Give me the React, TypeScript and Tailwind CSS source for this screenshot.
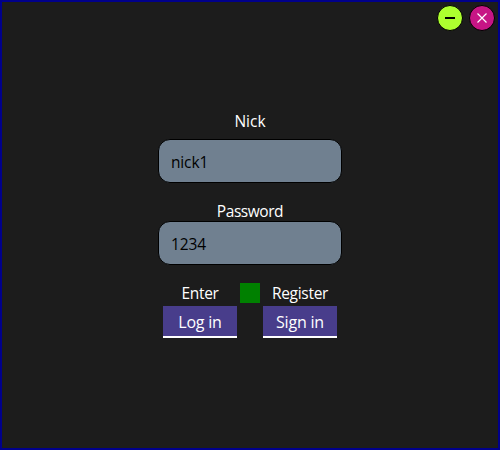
import { useState } from "react";

const font = "font-['Segoe_UI','Open_Sans',sans-serif]";

function TitleBar() {
  return (
    <header className="flex h-[34px] justify-end gap-[6px] pr-[3px] pt-[3px]">
      <button aria-label="Minimize" className="size-[26px] rounded-full border border-black bg-[#adff2f]">
        <svg viewBox="0 0 24 24" className="size-6">
          <path d="M7 12H17" stroke="black" strokeWidth="2" />
        </svg>
      </button>
      <button aria-label="Close" className="size-[26px] rounded-full border border-black bg-[#c71585]">
        <svg viewBox="0 0 24 24" className="size-6">
          <path d="M7.5 7.5L16.5 16.5M16.5 7.5L7.5 16.5" stroke="white" strokeWidth="1.2" />
        </svg>
      </button>
    </header>
  );
}

function Field({ value, onChange }: { value: string; onChange: (v: string) => void }) {
  return (
    <input
      value={value}
      onChange={(e) => onChange(e.target.value)}
      className="h-[44px] w-[184px] rounded-[12px] border border-black bg-[#708090] pl-3 pt-px text-[15.5px] tracking-[-0.15px] text-black outline-none"
    />
  );
}

export default function App() {
  const [nick, setNick] = useState("nick1");
  const [password, setPassword] = useState("1234");
  const button = "mt-[3px] h-8 w-[74px] border-b-2 border-white bg-[#483d8b] pt-[2px] text-[16px] tracking-[-0.2px]";

  return (
    <main className={`${font} h-[450px] w-[500px] border-2 border-[#00008b] bg-[#1c1c1c] text-[15.5px] leading-5 text-white`}>
      <TitleBar />
      <form className="flex flex-col items-center pt-[75px]" onSubmit={(e) => e.preventDefault()}>
        <label className="mb-2">Nick</label>
        <Field value={nick} onChange={setNick} />
        <label className="mt-[18px] tracking-[-0.45px]">Password</label>
        <Field value={password} onChange={setPassword} />
        <div className="mt-[18px] flex">
          <div className="flex w-[77px] flex-col items-start">
            <span className="w-[74px] text-center tracking-[-0.3px]">Enter</span>
            <button className={button}>Log in</button>
          </div>
          <div className="size-5 bg-[#008000]" />
          <div className="flex w-[77px] flex-col items-end">
            <span className="w-[74px] text-center tracking-[-0.3px]">Register</span>
            <button className={button}>Sign in</button>
          </div>
        </div>
      </form>
    </main>
  );
}
